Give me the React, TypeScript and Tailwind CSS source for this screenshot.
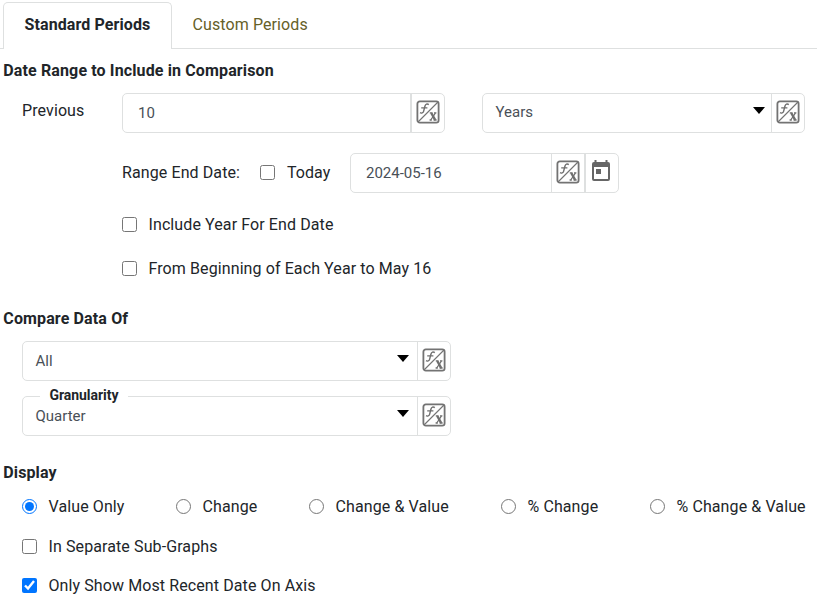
import type { ReactNode } from "react";

function FxIcon() {
  return (
    <svg width="24" height="24" viewBox="0 0 24 24" fill="none" className="-mt-0.5 shrink-0">
      <rect x="1.4" y="1.4" width="21.2" height="21.2" rx="2.4" stroke="#737373" strokeWidth="1.8" />
      <path d="M2 22 22 2" stroke="#737373" strokeWidth="1.1" />
      <path d="M12.8 4.6C11.2 3.4 9.5 4 8.9 6.2L7.6 11.3C7.2 13 5.4 13.5 4 12.7M5.2 7.9H11.4" stroke="#6f6f6f" strokeWidth="1.4" />
      <path d="M13.8 12.9h2.6M18 12.9h2.4M13.6 20h2.2M17.6 20h3M19.5 13l-4.8 7" stroke="#6f6f6f" strokeWidth="1.3" />
      <path d="m15.3 13 3.9 7" stroke="#6f6f6f" strokeWidth="2.5" />
    </svg>
  );
}

function CalendarIcon() {
  return (
    <svg width="20" height="22" viewBox="0 0 20 22" className="shrink-0">
      <path
        fill="#666"
        fillRule="evenodd"
        d="M3.5 0h2v2h9V0h2v2H17a2 2 0 0 1 2 2v15a2 2 0 0 1-2 2H3a2 2 0 0 1-2-2V4a2 2 0 0 1 2-2h.5zM3 7v12h14V7zm2 2h5v5H5z"
      />
    </svg>
  );
}

function Caret() {
  return (
    <svg width="12" height="7" viewBox="0 0 12 7" className="mb-[5px] shrink-0">
      <path d="M0 0h12L6 7z" fill="#000" />
    </svg>
  );
}

function FxCell({ wide }: { wide?: boolean }) {
  return (
    <div className={`flex shrink-0 items-center justify-center border-[#dee0e0] ${wide ? "w-[34px] border-l-2" : "w-[33px] border-l"}`}>
      <FxIcon />
    </div>
  );
}

type FieldProps = {
  value: string;
  className: string;
  select?: boolean;
  wideDivider?: boolean;
  caretGap?: string;
  textOffset?: string;
  children?: ReactNode;
};

function Field({ value, className, select, wideDivider, caretGap = "pr-[6px]", textOffset = "-mt-px", children }: FieldProps) {
  return (
    <div className={`flex h-10 rounded-[5px] border border-[#dee0e0] text-[15px] text-[#495057] ${className}`}>
      <div className={`flex min-w-0 flex-1 items-center justify-between ${caretGap} ${select ? "pl-[12.5px]" : "pl-[15px]"}`}>
        <span className={`tracking-normal ${textOffset}`}>{value}</span>
        {select && <Caret />}
      </div>
      <FxCell wide={wideDivider} />
      {children}
    </div>
  );
}

function Choice({ label, type = "checkbox", checked, className = "" }: { label: string; type?: "checkbox" | "radio"; checked?: boolean; className?: string }) {
  return (
    <label className={`flex h-6 items-center whitespace-nowrap ${className}`}>
      <input type={type} name={type === "radio" ? "display" : undefined} defaultChecked={checked} className="mr-[11.5px] mt-px h-[15px] w-[15px] shrink-0" />
      <span className="pt-0.5">{label}</span>
    </label>
  );
}

export default function App() {
  return (
    <div className="h-[597px] w-[817px] overflow-hidden bg-white font-['Roboto',sans-serif] text-base leading-6 tracking-[0.1px] text-[#212529]">
      <nav className="flex h-[49px] border-b border-[#dee0e0] pl-[3px] pt-[2px]">
        <div className="h-[47px] w-[169px] shrink-0 rounded-t-[5px] border border-b-0 border-[#dee0e0] bg-white pt-[10px] text-center font-bold">
          Standard Periods
        </div>
        <div className="pl-[20.5px] pt-[11px] text-[#666028]">Custom Periods</div>
      </nav>

      <section>
        <h2 className="mt-[10px] pl-[3.3px] font-bold tracking-[0.13px]">Date Range to Include in Comparison</h2>
        <div className="mt-[10px] flex pl-[22px]">
          <span className="w-[100px] pt-[6px]">Previous</span>
          <Field value="10" wideDivider className="w-[323px]" />
          <Field value="Years" select textOffset="-mt-[3px]" className="ml-[37px] w-[323px]" />
        </div>
        <div className="mt-5 flex pl-[122px]">
          <span className="w-[138.4px] pt-[8px]">Range End Date:</span>
          <Choice label="Today" className="mt-[7px] w-[89.6px]" />
          <Field value="2024-05-16" className="w-[269px]">
            <div className="flex w-[34px] justify-center border-l-2 border-[#dee0e0] pr-[2px] pt-[6px]">
              <CalendarIcon />
            </div>
          </Field>
        </div>
        <Choice label="Include Year For End Date" className="ml-[122px] mt-[19px]" />
        <Choice label="From Beginning of Each Year to May 16" className="ml-[122px] mt-5" />
      </section>

      <section>
        <h2 className="mt-[27px] pl-[3.3px] font-bold tracking-[0.13px]">Compare Data Of</h2>
        <div className="mt-[10px] pl-[22px]">
          <Field value="All" select caretGap="pr-2" className="w-[429px]" />
          <div className="relative mt-[15px]">
            <Field value="Quarter" select caretGap="pr-2" className="w-[429px]" />
            <span className="absolute -top-[11px] left-[18px] bg-white px-[9.5px] text-sm font-bold leading-5 tracking-[-0.05px]">Granularity</span>
          </div>
        </div>
      </section>

      <section>
        <h2 className="mt-[25px] pl-[3.3px] font-bold">Display</h2>
        <div className="mt-[9px] flex pl-[22px]">
          <Choice type="radio" label="Value Only" checked className="w-[154px]" />
          <Choice type="radio" label="Change" className="w-[133px]" />
          <Choice type="radio" label="Change & Value" className="w-[192px]" />
          <Choice type="radio" label="% Change" className="w-[149px]" />
          <Choice type="radio" label="% Change & Value" />
        </div>
        <Choice label="In Separate Sub-Graphs" className="ml-[22px] mt-4" />
        <Choice label="Only Show Most Recent Date On Axis" checked className="ml-[22px] mt-[15px]" />
      </section>
    </div>
  );
}
